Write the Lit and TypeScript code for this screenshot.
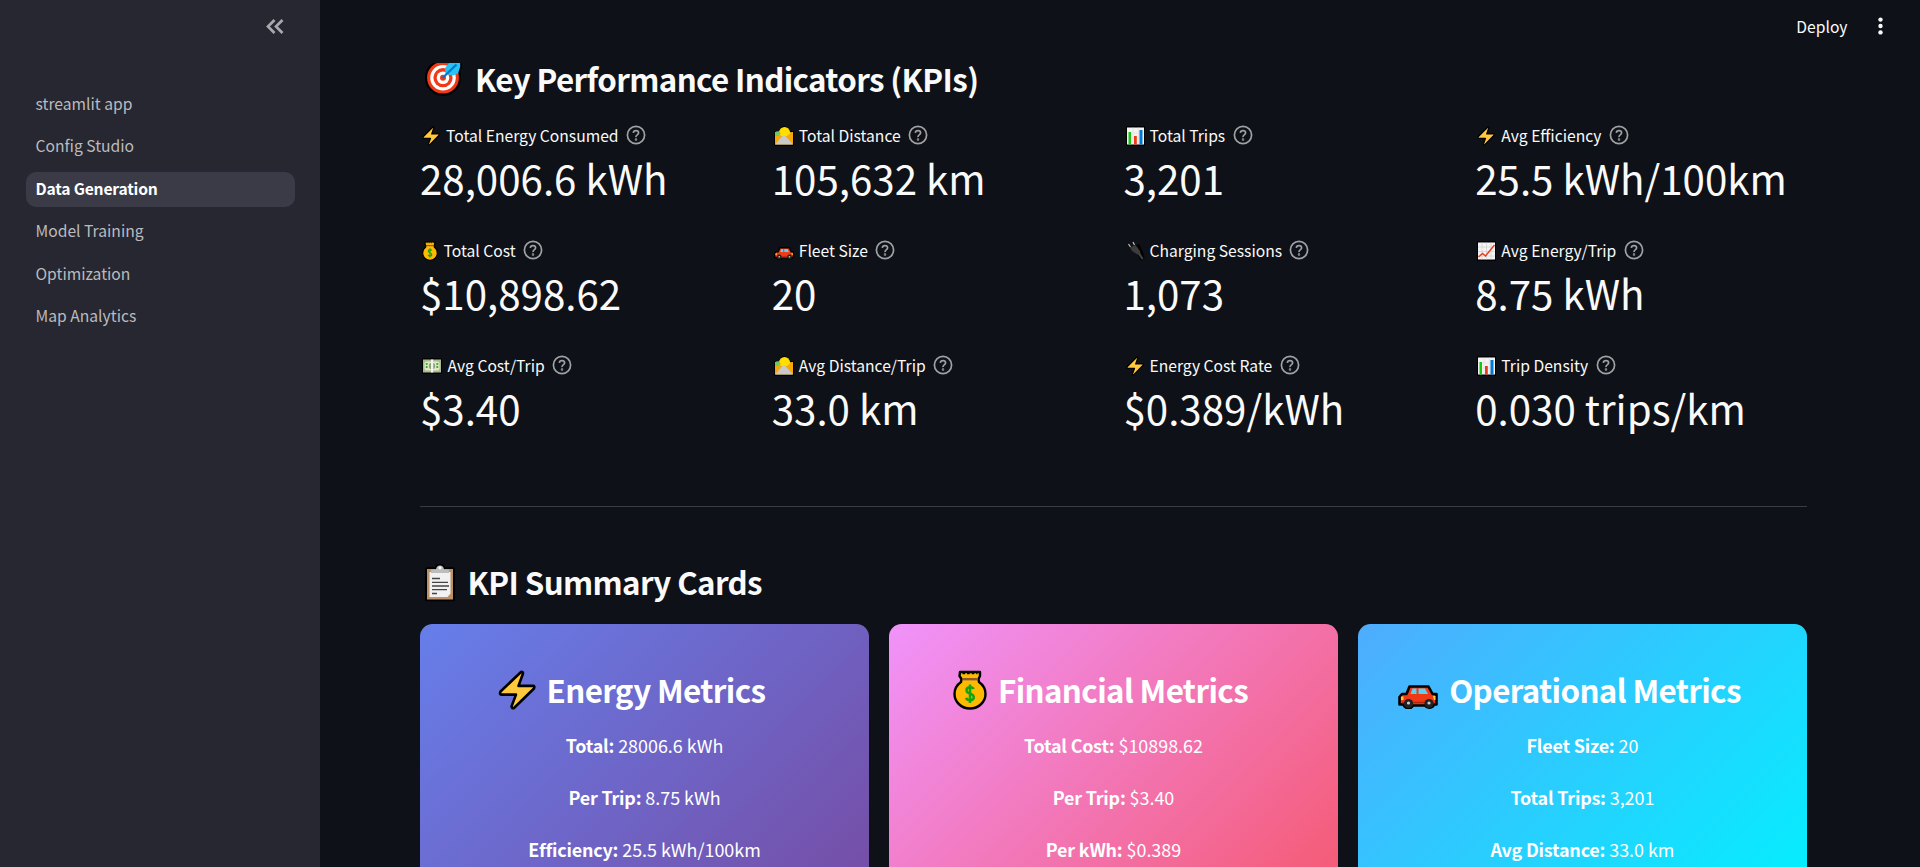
import { LitElement, html, svg, css } from "lit";
import { customElement, property } from "lit/decorators.js";

const ICONS: Record<string, { box: string; art: unknown }> = {
  bolt: {
    box: "0 0.5 38 39",
    art: svg`<path d="M23 2.5 2.5 21.5Q1 24.5 4 24.500H18L13.500 36Q14 38.500 16 37.500L36 18.500Q37 16 35 16H20.500L25 4Q25 2 23 2.500Z" fill="#ffc83d" stroke="#000" stroke-width="2.600" stroke-linejoin="round"/>`,
  },
  target: {
    box: "0 0 38 33",
    art: svg`<circle cx="18" cy="14.700" r="17" fill="#f03a17" stroke="#000" stroke-width="2.200"/><circle cx="18" cy="14.700" r="12.800" fill="#fff"/><circle cx="18" cy="14.700" r="9.600" fill="#f03a17"/><circle cx="18" cy="14.700" r="6.300" fill="#fff"/><circle cx="18" cy="14.700" r="3" fill="#f03a17"/><path d="M25 -1H36V4L34 10 28 12.500 20.500 11 20 5Z" fill="#28c3f5"/><path d="M36 -1V4L34 10" fill="none" stroke="#000" stroke-width="1.600"/><path d="M17.500 15 31.500 1.500" stroke="#0078d4" stroke-width="2.200"/>`,
  },
  clipboard: {
    box: "0 0 32 38",
    art: svg`<rect x="1" y="3.200" width="30" height="34" rx="1.500" fill="#000"/><rect x="11" y="0" width="10" height="8" rx="4" fill="#000"/><rect x="3" y="5" width="26" height="30.500" fill="#bd9168"/><path d="M5.500 8H26.500V29.500L23.500 33H5.500Z" fill="#f1f1f1"/><path d="M7 9V5.500H12Q12.500 1.500 16 1.500T20 5.500H25V9Z" fill="#bdbdbd"/><circle cx="16" cy="4" r="1.400" fill="#fff"/><path d="M8 14.500H16M8 18.300H24M8 22H25M8 25.700H23M8 29.500H13" stroke="#444" stroke-width="1.300"/>`,
  },
  bag: {
    box: "0 0 34 40",
    art: svg`<path d="M7 2H27V6L25.500 9 26 12Q32.500 16.500 32.500 24A15.500 14.500 0 0 1 1.500 24Q1.500 16.500 8 12L8.500 9 6.500 6Z" fill="#ffb900" stroke="#000" stroke-width="2.400" stroke-linejoin="round"/><path d="M9.500 3.500H24.500" stroke="#000" stroke-width="1.300" stroke-dasharray="2.600 2"/><path d="M9.500 9.200H25" stroke="#8e562e" stroke-width="2.400"/><path d="M20.500 19Q20 17.200 17 17.200 13.500 17.200 13.500 20 13.500 22.600 17 23.600 20.800 24.700 20.800 27.300 20.800 30.200 17 30.200 13.600 30.200 13.200 27.800M17 14.500V33" fill="none" stroke="#16a310" stroke-width="2.500"/>`,
  },
  car: {
    box: "0 0 40 24",
    art: svg`<path d="M11.500 1.500H30.500L34.500 9H38.500V19.500H36A5 4.500 0 0 1 27 20.500H15A5 4.500 0 0 1 5.500 19.500H1.500V12L4 9H8.500Z" fill="#f03a17" stroke="#000" stroke-width="2.600" stroke-linejoin="round"/><path d="M12.500 9 14.500 3.500H18.500V9ZM20.500 9V3.500H27L30 9Z" fill="#5fd0f0"/><path d="M3 11.500H5.500V15H3M35 11H37.500V15H36Z" fill="#ffc83d"/><path d="M4 17.500H36" stroke="#b4260d" stroke-width="1.500"/><circle cx="10.500" cy="18.500" r="4.600" fill="#222"/><circle cx="31" cy="18.500" r="4.600" fill="#222"/><circle cx="10.500" cy="18" r="1.600" fill="#ccc"/><circle cx="31" cy="18" r="1.600" fill="#ccc"/>`,
  },
  road: {
    box: "0 0 20 20",
    art: svg`<path d="M0 5H5Q7 0 10 0T15 5H20V20H0Z" fill="#000"/><path d="M1 6Q5 4 8 7L19 6V18.500H1Z" fill="#f7a70c"/><path d="M4.500 7Q6 1 10.500 1T16.500 7L13 10H7Z" fill="#ffde00"/><path d="M1 6H6L6.500 8 4 10H1Z" fill="#6fc95c"/><path d="M9 9.500H11L19 18.500H1Z" fill="#c9c9c9"/>`,
  },
  bars: {
    box: "0 0 20 20",
    art: svg`<rect width="19" height="20" rx="1" fill="#000"/><rect x="1" y="1.500" width="17" height="17" fill="#f4f4f4"/><path d="M7 1.500V18M12.500 1.500V18M1 7H18M1 12H18" stroke="#ddd" stroke-width=".6"/><path d="M2.500 6H5V18.500H2.500Z" fill="#16c60c"/><path d="M8 10H10.800V18.500H8Z" fill="#f03a17"/><path d="M13.500 4H16.500V18.500H13.500Z" fill="#0078d4"/>`,
  },
  plug: {
    box: "0 0 20 20",
    art: svg`<path d="M6 8 12 6 15 13Q14.500 15.500 17 18" fill="none" stroke="#000" stroke-width="5"/><path d="M4 6.500 9.500 4 14 10 14.500 13 11.500 13.500 6 10Z" fill="#3c3c3c"/><path d="M13 12.500 16.500 18" stroke="#444" stroke-width="2.200"/><path d="M4.500 6 2.500 3M8.500 4 7 1" stroke="#bbb" stroke-width="1.300"/>`,
  },
  trend: {
    box: "0 0 20 20",
    art: svg`<rect width="19" height="20" rx="1" fill="#000"/><rect x="1" y="1.500" width="17" height="17" fill="#f4f4f4"/><path d="M5 1.500V18.500M9.500 1.500V18.500M14 1.500V18.500M1 6H18M1 10.500H18M1 15H18" stroke="#cfcfcf" stroke-width=".7"/><path d="M1.500 16 5.500 12.500 8.500 15 17.500 4" fill="none" stroke="#f03a17" stroke-width="1.400"/>`,
  },
  bill: {
    box: "0 0 20 16",
    art: svg`<rect width="20" height="16" rx="1" fill="#000"/><rect x="1" y="1.500" width="18" height="13" fill="#a9ba90"/><rect x="2.500" y="3.500" width="15" height="9" rx="2" fill="#dfe9c8"/><path d="M4.700 5V11M15.300 5V11" stroke="#41a535" stroke-width="1.800" stroke-dasharray="2 1"/><circle cx="10" cy="8" r="3.200" fill="#8ba37c"/><rect x="9" y="1.500" width="2.200" height="13" fill="#f3f3f3"/>`,
  },
};

@customElement("ui-emoji")
class UiEmoji extends LitElement {
  @property() name = "bolt";
  static styles = css`
    :host { display: inline-flex; align-items: center; flex: none; }
    svg { width: 100%; height: 100%; overflow: hidden; }
  `;
  render() {
    const i = ICONS[this.name];
    return html`<svg viewBox=${i.box} preserveAspectRatio="none">${i.art}</svg>`;
  }
}

const METRICS = [
  ["bolt", "Total Energy Consumed", "28,006.6 kWh"],
  ["road", "Total Distance", "105,632 km"],
  ["bars", "Total Trips", "3,201"],
  ["bolt", "Avg Efficiency", "25.5 kWh/100km"],
  ["bag", "Total Cost", "$10,898.62"],
  ["car", "Fleet Size", "20"],
  ["plug", "Charging Sessions", "1,073"],
  ["trend", "Avg Energy/Trip", "8.75 kWh"],
  ["bill", "Avg Cost/Trip", "$3.40"],
  ["road", "Avg Distance/Trip", "33.0 km"],
  ["bolt", "Energy Cost Rate", "$0.389/kWh"],
  ["bars", "Trip Density", "0.030 trips/km"],
];

const CARDS = [
  { tone: "energy", icon: "bolt", title: "Energy Metrics", rows: [["Total:", "28006.6 kWh"], ["Per Trip:", "8.75 kWh"], ["Efficiency:", "25.5 kWh/100km"]] },
  { tone: "finance", icon: "bag", title: "Financial Metrics", rows: [["Total Cost:", "$10898.62"], ["Per Trip:", "$3.40"], ["Per kWh:", "$0.389"]] },
  { tone: "ops", icon: "car", title: "Operational Metrics", rows: [["Fleet Size:", "20"], ["Total Trips:", "3,201"], ["Avg Distance:", "33.0 km"]] },
];

const PAGES = ["streamlit app", "Config Studio", "Data Generation", "Model Training", "Optimization", "Map Analytics"];

@customElement("app-root")
class AppRoot extends LitElement {
  static styles = css`
    * { box-sizing: border-box; }
    :host {
      display: flex; width: 1920px; height: 867px; overflow: hidden;
      background: #0e1117; color: #fafafa;
      font-family: "Noto Sans CJK SC", "Open Sans", sans-serif;
      font-size: 15.67px; white-space: nowrap;
    }
    .side { width: 320px; flex: none; background: #262730; }
    .top { height: 83px; padding: 19px 36px 0 0; display: flex; justify-content: flex-end; }
    .top svg { width: 18px; height: 15px; }
    nav { display: flex; flex-direction: column; gap: 7.400px; padding: 4px 25px 0 26px; }
    .page { height: 35px; line-height: 33px; padding-left: 9.500px; border-radius: 10px; color: #bbbbbf; }
    .page.on { background: #3b3b47; color: #fff; font-weight: 700; letter-spacing: -.2px; }
    main { flex: 1; min-width: 0; padding: 0 113px 0 100px; display: flex; flex-direction: column; }
    main > * { flex: none; }
    .bar { height: 53px; padding-bottom: 1px; margin-right: -76px; display: flex; justify-content: flex-end; align-items: center; gap: 30.500px; }
    .bar svg { width: 5px; height: 18px; }
    h2 { margin: 0; height: 52px; display: flex; align-items: center; font-size: 31.300px; line-height: 52px; font-weight: 700; letter-spacing: -.63px; }
    .kpis { display: grid; grid-template-columns: repeat(4, 351.750px); grid-auto-rows: 115px; margin-top: 16px; }
    .label { display: flex; align-items: center; height: 29px; line-height: 29px; }
    .value { font-size: 40.250px; line-height: 60px; height: 60px; margin-top: -2px; }
    .q { width: 20px; height: 20px; margin: -1px 0 0 7.400px; }
    .label ui-emoji { width: 20px; height: 20px; margin: 0 5px 0 2px; }
    .label ui-emoji[name="bag"] { width: 16px; margin-right: 5.500px; }
    .label ui-emoji[name="bolt"] { width: 18px; margin-right: 6px; }
    .label ui-emoji[name="car"] { height: 13px; margin-top: 5px; }
    .label ui-emoji[name="bill"] { height: 16px; margin-right: 5.500px; }
    .label ui-emoji[name="bars"], .label ui-emoji[name="trend"], .label ui-emoji[name="plug"] { margin-right: 4px; }
    .rule { height: 1px; background: #3a3c42; margin-top: 40px; }
    .h-target { width: 38px; height: 33px; margin: 1px 12px 0 5px; }
    .h-clip { width: 32px; height: 38px; margin: 1px 11.500px 0 4px; }
    h2.second { margin-top: 49px; }
    .cards { display: grid; grid-template-columns: repeat(3, 449px); gap: 20px; margin-top: 16px; }
    .card { height: 300px; border-radius: 12.500px; color: #fff; display: flex; flex-direction: column; align-items: center; padding-top: 40px; }
    .energy { background: linear-gradient(135deg, #667eea 0%, #764ba2 100%); }
    .finance { background: linear-gradient(135deg, #f093fb 0%, #f5576c 100%); }
    .ops { background: linear-gradient(135deg, #4facfe 0%, #00f2fe 100%); }
    .card h2 { margin-bottom: 14px; padding-right: 26px; }
    .card h2 ui-emoji { width: 38px; height: 40px; margin-right: 11px; }
    .card h2 ui-emoji[name="bag"] { width: 34px; }
    .card h2 ui-emoji[name="car"] { width: 40px; height: 24px; margin-top: 14px; }
    .row { font-size: 17.910px; height: 52px; line-height: 30px; }
    .row b { letter-spacing: -.2px; }
  `;

  render() {
    return html`
      <aside class="side">
        <div class="top"><svg viewBox="0 0 18 15"><path d="M8.500 1 2 7.500 8.500 14M16.500 1 10 7.500 16.500 14" fill="none" stroke="#a9a9ad" stroke-width="2.700"/></svg></div>
        <nav>${PAGES.map((p) => html`<a class="page ${p === "Data Generation" ? "on" : ""}">${p}</a>`)}</nav>
      </aside>
      <main>
        <div class="bar"><span>Deploy</span><svg viewBox="0 0 5 18"><g fill="#fafafa"><circle cx="2.500" cy="2.600" r="2.200"/><circle cx="2.500" cy="9" r="2.200"/><circle cx="2.500" cy="15.400" r="2.200"/></g></svg></div>
        <h2><ui-emoji class="h-target" name="target"></ui-emoji><span>Key Performance Indicators (KPIs)</span></h2>
        <section class="kpis">
          ${METRICS.map(([icon, label, value]) => html`
            <div>
              <div class="label"><ui-emoji name=${icon}></ui-emoji><span>${label}</span>
                <svg class="q" viewBox="0 0 20 20" fill="none" stroke="#a0a1a4" stroke-width="1.700"><circle cx="10" cy="10" r="8.600"/><path d="M7.300 7.800Q7.500 5.600 10 5.600T12.600 7.800Q12.600 9 11.200 9.900T10 12.200"/><circle cx="10" cy="14.500" r=".4"/></svg>
              </div>
              <div class="value">${value}</div>
            </div>`)}
        </section>
        <div class="rule"></div>
        <h2 class="second"><ui-emoji class="h-clip" name="clipboard"></ui-emoji><span>KPI Summary Cards</span></h2>
        <section class="cards">
          ${CARDS.map((c) => html`
            <article class="card ${c.tone}">
              <h2><ui-emoji name=${c.icon}></ui-emoji><span>${c.title}</span></h2>
              ${c.rows.map(([k, v]) => html`<div class="row"><b>${k}</b> ${v}</div>`)}
            </article>`)}
        </section>
      </main>`;
  }
}
